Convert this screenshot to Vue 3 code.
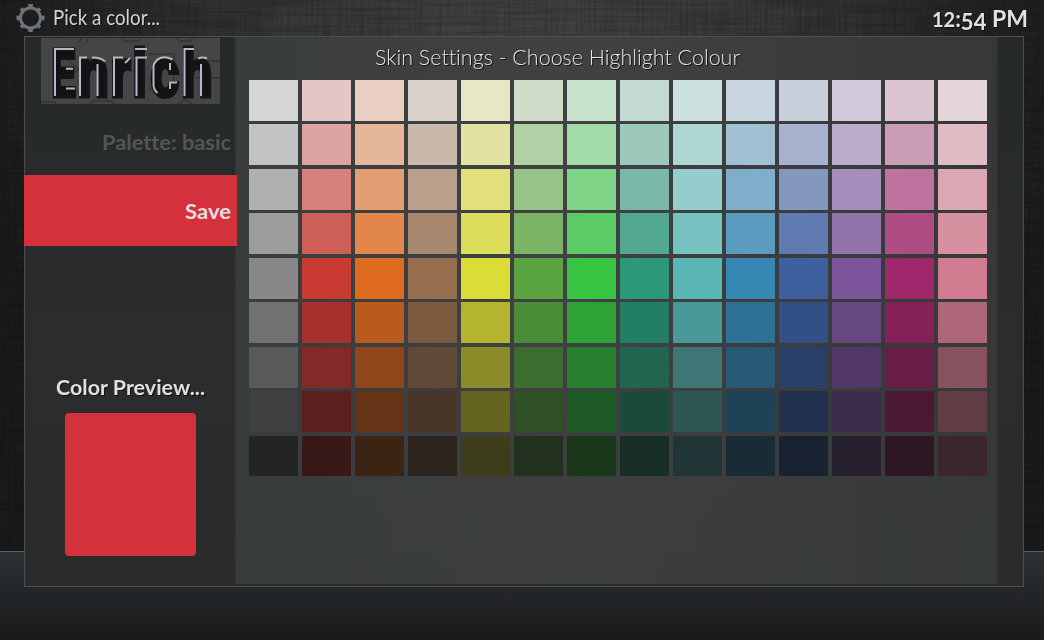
<script setup>
const shades = [
  ['#d6d6d6','#e4c6c4','#e9cfc2','#dbd1cb','#e7e6c5','#d0dcc8','#c7e3ca','#c3dad2','#cce0df','#c6d5df','#c9cfdc','#d3cadc','#dcc4d0','#e5d4d7'],
  ['#c3c3c3','#dda5a2','#e6b69b','#c9b8ab','#e3e2a3','#b0d0a6','#a2dba8','#9dc9bc','#aed6d4','#a2c0d4','#a5b1cd','#bbadcb','#cb9cb6','#e0bdc4'],
  ['#b0b0b0','#d6817c','#e49e74','#b8a08c','#e1e07d','#96c387','#80d487','#79b7a6','#94cdcb','#7eaeca','#8397bf','#a78fbd','#bd739e','#dba7b2'],
  ['#9c9c9c','#ce5e58','#e2864a','#a7876d','#dcdd5a','#7bb465','#5acb65','#52a88f','#75c2c0','#5c9bc0','#607ab2','#9273ac','#ad4d83','#d691a1'],
  ['#888888','#c93a33','#df6b21','#976e4e','#dcdc37','#5ba541','#37c441','#2b9977','#5ab6b5','#3787b4','#3d609f','#7c549b','#9e286b','#d07b90'],
  ['#717171','#a8312d','#b95b1d','#7d5b41','#b4b42f','#4a8d37','#2fa236','#237f63','#4a9897','#2d7195','#325085','#664780','#842158','#ad6677'],
  ['#595959','#842927','#90461b','#604936','#8b8c29','#3d6d2e','#26802d','#1f654f','#3d7675','#265a75','#2a3f68','#513866','#671d46','#86525d'],
  ['#404040','#5d1f1e','#653316','#483528','#636420','#305126','#1e5a25','#1b493b','#2d5655','#1f4256','#22304d','#3d2b4b','#4b1932','#603e44'],
  ['#242424','#381817','#3c2414','#2e241e','#3d3e19','#22311d','#193819','#172f28','#203536','#192b35','#192230','#27202f','#2f1623','#3b272b']
]
const colours = shades.flat()
</script>

<template>
  <main class="screen">
    <svg class="weave" width="1044" height="551">
      <filter id="weft" x="0" y="0" width="100%" height="100%">
        <feTurbulence type="fractalNoise" baseFrequency="0.012 0.35" numOctaves="3" seed="4" />
        <feColorMatrix values="0 0 0 0 0  0 0 0 0 0  0 0 0 0 0  1.3 0 0 0 -0.42" />
      </filter>
      <filter id="warp" x="0" y="0" width="100%" height="100%">
        <feTurbulence type="fractalNoise" baseFrequency="0.35 0.015" numOctaves="3" seed="9" />
        <feColorMatrix values="0 0 0 0 0  0 0 0 0 0  0 0 0 0 0  1.2 0 0 0 -0.42" />
      </filter>
      <rect width="1044" height="551" filter="url(#weft)" />
      <rect width="1044" height="551" filter="url(#warp)" />
    </svg>
    <div class="floor"></div>
    <header class="topbar">
      <svg class="gear" width="30" height="30" viewBox="0 0 30 30">
        <circle cx="14.5" cy="15" r="10" fill="none" stroke="#6d747a" stroke-width="3" />
        <g fill="#6d747a">
          <rect v-for="n in 4" :key="'a' + n" x="12.2" y="1" width="4.6" height="4.5" :transform="`rotate(${n * 90} 14.5 15)`" />
          <rect v-for="n in 4" :key="'b' + n" x="12.6" y="1.6" width="3.8" height="4" :transform="`rotate(${n * 90 + 45} 14.5 15)`" />
        </g>
      </svg>
      <svg class="heading" width="125" height="36"><text x="0" y="25" textLength="107" lengthAdjust="spacingAndGlyphs">Pick a color...</text></svg>
      <svg class="clock" width="115" height="36">
        <text x="15" y="27" font-size="22" textLength="96" lengthAdjust="spacingAndGlyphs"><tspan font-size="20">12</tspan>:<tspan dy="3">54</tspan><tspan dy="-3" font-size="23"> PM</tspan></text>
      </svg>
    </header>
    <section class="dialog">
      <aside class="side">
        <svg class="logo" width="179" height="66" viewBox="0 0 179 66">
          <rect width="179" height="66" fill="#454545" />
          <g fill="none" stroke="#383838" stroke-width="2">
            <path d="M38 4l3-5M45 4l3-5M82 0v3h17V0M135 0l4 3h10l4-4M27 22l10 9-10 9M154 23h25M154 40h25M0 64h14v2M49 66l3-3h18l3 3M137 66l7-4 7 4M108 16h25v34h-25" />
          </g>
          <g transform="scale(.76 1)">
            <text class="logo-face" y="58"><tspan x="14" textLength="32" lengthAdjust="spacingAndGlyphs">E</tspan><tspan x="48 91.500 120.500 144 184.500">nrich</tspan></text>
          </g>
          <path class="logo-light" d="M33 11H14V58M25 30.7h7M25 50.5h9M46 19.5h-7V58M51 19.5q9 0 13 4M56.5 26v32M82 19.5h-9V58M84 25l5-5M94 11h12M106 19.5H95.500V58M131.500 21.500q-10-5-16 1-3 3-3 6v18q0 5 4 8.500M129 25v7M136 44.500h-7V51M153 11h-9.500V58M157 20.500q5-2 9 0M160 26v32" />
        </svg>
        <div class="option palette"><svg width="140" height="40"><text x="7" y="28" textLength="129" lengthAdjust="spacingAndGlyphs">Palette: basic</text></svg></div>
        <div class="option save"><svg width="60" height="40"><text x="10" y="28" textLength="46" lengthAdjust="spacingAndGlyphs">Save</text></svg></div>
        <div class="preview">
          <svg width="160" height="36"><text x="5" y="25" textLength="149" lengthAdjust="spacingAndGlyphs">Color Preview...</text></svg>
          <div class="sample"></div>
        </div>
      </aside>
      <section class="content">
        <svg class="title" width="380" height="43"><text x="8" y="28" textLength="365" lengthAdjust="spacingAndGlyphs">Skin Settings - Choose Highlight Colour</text></svg>
        <div class="grid">
          <div v-for="(c, i) in colours" :key="i" class="swatch" :style="{ background: c }"></div>
        </div>
      </section>
    </section>
  </main>
</template>

<style>
body { background: #1a1a1a; overflow: hidden; }
</style>
<style scoped>
* { box-sizing: border-box; }
svg { display: block; }
.screen {
  position: relative; width: 1044px; height: 640px; overflow: hidden;
  font-family: Lato, "Open Sans", sans-serif; font-variant-ligatures: none;
  background: radial-gradient(ellipse 560px 460px at 530px 60px, #464646 0%, #393939 45%, #1c1c1c 100%);
}
.weave { position: absolute; left: 0; top: 0; opacity: .32; }
.floor {
  position: absolute; left: 0; right: 0; bottom: 0; height: 89px;
  border-top: 1px solid #576066;
  background: linear-gradient(#2b3033 0, #25282b 35px, #1d1e1f 72px, #1a1a1b 100%);
}
.topbar { position: relative; display: flex; height: 36px; padding: 0 12px 0 16px; }
.gear { margin-top: 3px; }
.heading { margin-left: 7px; font-size: 21px; fill: #d4d4d4; filter: drop-shadow(1px 1px 0 #111); }
.clock { margin-left: auto; font-weight: 700; fill: #e2e2e2; filter: drop-shadow(1px 1px 0 #111); }
.dialog {
  position: relative; display: flex; width: 1000px; height: 551px; margin-left: 24px;
  border: 1px solid #4d4f50;
  background: linear-gradient(#262929, #2a2c2d 60%, #292b2b 90%, #2b2b2c);
}
.side { position: relative; z-index: 1; width: 210px; }
.logo { margin: 1px 0 0 16px; }
.option { display: flex; justify-content: flex-end; align-items: center; font-size: 20px; font-weight: 700; }
.palette { height: 71px; padding-top: 5px; fill: #545555; }
.save { width: 213px; height: 71px; margin-left: -1px; padding-right: 2px; background: #d4313d; fill: #e5dede; }
.preview { margin-top: 124px; font-size: 20px; font-weight: 700; fill: #e0e0e0; }
.preview svg { margin-left: 26px; filter: drop-shadow(1px 1px 0 #111); }
.sample { width: 131px; height: 143px; margin: 7px 0 0 40px; border-radius: 4px; background: #d4313d; }
.content {
  width: 763px; height: 547px; border-left: 2px solid #363838; border-right: 2px solid #313334;
  background: linear-gradient(180deg, transparent 50%, rgba(56, 59, 59, .6)), linear-gradient(90deg, #393c3d, #404142 45%, #353738);
}
.title { margin-left: 130px; font-size: 22px; font-weight: 300; fill: #e6e6e6; filter: drop-shadow(1px 1px 0 #111); }
.grid {
  display: grid; margin-left: 12px; column-gap: 4px;
  grid-template-columns: repeat(14, 49px);
  grid-template-rows: 44px 45px 44px 45px 44px 45px 44px 45px 40px;
}
.swatch { height: 41px; }
.swatch:nth-last-child(-n+14) { height: 40px; }
.logo-face {
  font-family: "Liberation Sans", sans-serif; font-size: 67px; font-weight: 700;
  fill: #111; stroke: #141414; stroke-width: 5px;
}
.logo-light { fill: none; stroke: #bcb3c6; stroke-width: 2px; }
</style>
